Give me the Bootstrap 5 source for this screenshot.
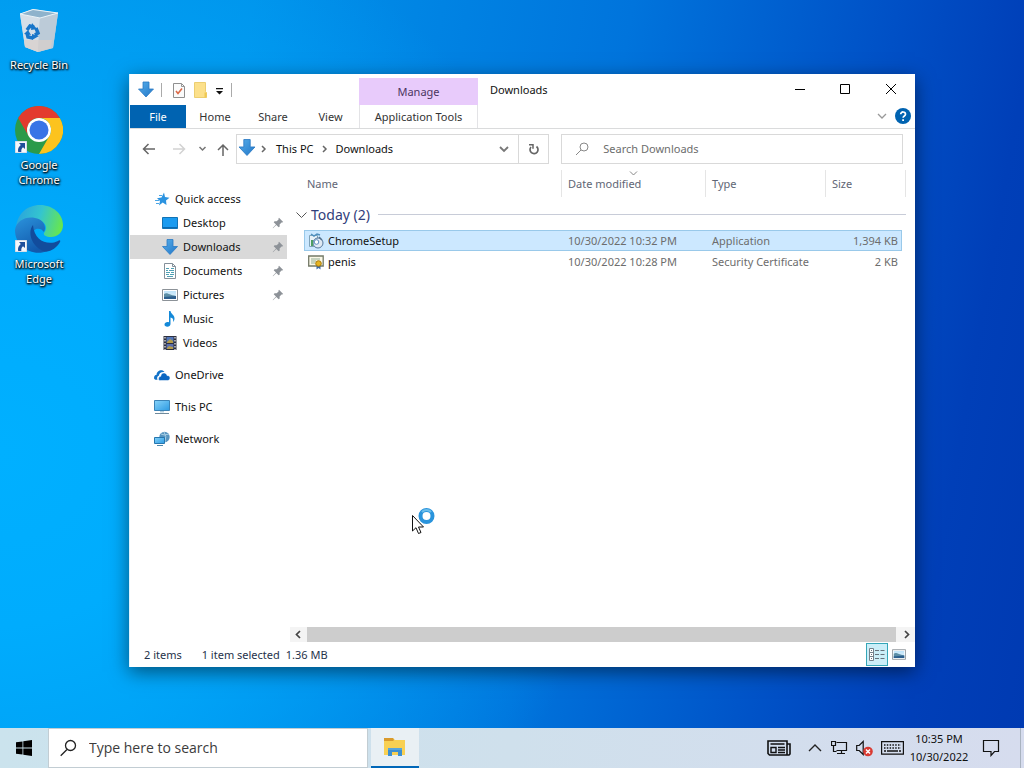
<!DOCTYPE html>
<html lang="en">
<head>
<meta charset="utf-8">
<meta name="viewport" content="width=device-width, initial-scale=1">
<title>Downloads</title>
<link href="https://cdn.jsdelivr.net/npm/bootstrap@5.3.0/dist/css/bootstrap.min.css" rel="stylesheet">
<style>
body{font-family:"Noto Sans","Open Sans",sans-serif;font-size:11px;line-height:16px;color:#111;height:100vh;overflow:hidden;background:#0078d4}
svg{display:block;flex:none}
button{border:0;background:none;padding:0;color:inherit}
.desk{background:radial-gradient(ellipse 60% 80% at 0% 62%,#00b0ff 0%,#00acfd 30%,rgba(0,160,248,0) 100%),linear-gradient(100deg,#0096ea 0%,#0092ea 22%,#0074dc 55%,#0050c6 78%,#003fb8 90%,#003ab2 100%);min-height:0}
.shortcuts{width:78px;padding-top:6px}
.shortcut{height:99px;color:#fff;line-height:15px;text-decoration:none;text-align:center;text-shadow:0 1px 2px #000,1px 1px 2px #000,0 0 3px rgba(0,0,0,.6)}
.shortcut .pic{margin-bottom:3px}
.shortcut:last-child .pic,.shortcut:nth-child(2) .pic{margin-top:1px}
.win{position:absolute;left:129px;right:109px;top:74px;bottom:61px;background:#fff;border-left:1px solid #dff4ff;box-shadow:0 5px 18px rgba(0,0,0,.5)}
.titlebar{height:31px}
.wintitle{font-size:11px}
.quickbar{width:229px;padding-left:8px}
.manage{width:119px;height:27px;background:#e8cbfb;color:#4b3560}
.ctl{width:46px;height:31px}
.tabs{height:24px;border-bottom:1px solid #dadbdc;color:#333}
.tabs button{height:23px;width:58px}
.tabs .filetab{background:#0063b1;color:#fff;width:56px}
.tabs .viewtab{width:57px}
.tabs .apptab{width:119px;border:1px solid #e3e3e6;border-width:0 1px}
.addrow{height:41px;padding:5px 12px 0 10px}
.arrows{width:96px;height:30px}
.box{height:30px;border:1px solid #d9d9d9}
.addr{flex:19 1 0;min-width:0;padding-left:1px}
.find{flex:20 1 0;min-width:0;margin-left:12px;padding-left:13px}
.find input,.tasksearch input{border:0;outline:0;background:none;min-width:0}
.find input::placeholder{color:#6d6d6d;opacity:1}
.refresh{width:30px;height:28px;border-left:1px solid #d9d9d9}
.side{width:157px;padding-top:17px}
.side a{height:24px;color:#111;text-decoration:none;padding-left:24px;gap:5px}
.side a.sub{padding-left:32px;padding-right:3px}
.side a.sel{background:#d9d9d9}
.side a.top{margin-top:8px}
.pane{padding-left:3px}
.files{border-collapse:separate;border-spacing:0;table-layout:fixed;margin:0 9px 0 6px;width:calc(100% - 15px);color:#6d6d6d}
.files th{font-weight:400}
.files thead th{height:27px;padding:0 0 0 6px;border-right:1px solid #e5e5e5;color:#5f6675;position:relative}
.files thead th:first-child{padding-left:11px}
.files .grp{height:33px;color:#31407b;font-size:14px;padding:2px 0 0}
.files .grp hr{margin:0;color:#c8ccd8;opacity:1}
.files td{height:21px;padding:0 0 0 6px;line-height:17px;white-space:nowrap;border:0 solid transparent;border-width:1px 0}
.files .edge{padding:0}
.files .fname{padding-left:3px;border-left-width:1px;color:#111}
.files .fsize{padding:0 3px 0 0;border-right-width:1px;text-align:right}
.files .on td:not(.edge){background:#cce8ff;border-color:#99c9ea}
.files col.gutter{width:8px}
.files col.cdate{width:144px}
.files col.ctype{width:120px}
.files col.csize{width:76px}
.files col.tail{width:4px}
.sortmark{position:absolute;left:67px;top:0}
.scroller{height:15px;background:#f4f4f4}
.scroller button{width:17px}
.scroller .toright{width:19px}
.thumb{background:#cdcdcd}
.status{height:25px;padding:0 5px 0 14px;color:#26324a}
.picked{margin-left:20px}
.total{margin-left:6px}
.viewon{width:22px;height:23px;background:#cbeef8;border:1px solid #35a6b8}
.taskbar{height:40px;background:linear-gradient(90deg,#cbe3ed,#cfe0ec 50%,#d6dcee)}
.start{width:48px}
.tasksearch{width:320px;background:#fff;border:1px solid #c2cdd3;padding-left:11px}
.tasksearch input{font-family:"Open Sans",sans-serif;font-size:14px;color:#333}
.tasksearch input::placeholder{color:#3c3c3c;opacity:1}
.explorer{width:48px;margin-left:3px;background:#e9f0f4;border-bottom:2px solid #0067b8}
.clock{line-height:18px;width:60px;color:#111;margin-left:5px}
.peek{width:4px;border-left:1px solid #a9b3c0}
.pointer{position:absolute;left:410px;top:505px;z-index:5}
</style>
</head>
<body class="d-flex flex-column">
<svg width="0" height="0" class="position-absolute" aria-hidden="true">
<defs>
<linearGradient id="gb" x2="1" y2="1"><stop offset="0" stop-color="#57aeea"/><stop offset="1" stop-color="#2277c8"/></linearGradient>
<linearGradient id="gp" x2="0" y2="1"><stop offset="0" stop-color="#bfe4fa"/><stop offset="1" stop-color="#e3f2fb"/></linearGradient>
<linearGradient id="gm" x2="1" y2="1"><stop offset="0" stop-color="#86d3fa"/><stop offset="1" stop-color="#2d9ae2"/></linearGradient>
</defs>
<symbol id="down" viewBox="0 0 16 16"><path d="M5 .5h6v7h4.500L8 15.500.500 7.500H5z" fill="url(#gb)" stroke="#2a7ac4" stroke-width=".8"/></symbol>
<symbol id="pin" viewBox="0 0 12 12"><path d="M7 .8 11.200 5l-1 .6-.7-.2L7.600 7.400l.1 2-1 .9-2.400-2.400L1 11.200l-.3-.3L4 7.500 1.700 5.200l.9-1 2 .1L6.600 2.400l-.2-.7z" fill="#8d9298"/></symbol>
<symbol id="photo" viewBox="0 0 16 12"><path d="M.5.5h15v11H.5z" fill="#fff" stroke="#8c9298"/><path d="M2 2h12v8H2z" fill="url(#gp)"/><path d="M2 5c3-2 5 1 12 2v3H2z" fill="#5c8ea6"/><path d="M2 8c4 0 7-1 12-1v3H2z" fill="#2c5f8e"/></symbol>
<symbol id="link" viewBox="0 0 12 12"><path d="M0 0h12v12H0z" fill="#f5f7fb" stroke="#b8c6d8"/><path d="M4 2h6v6L8 6.300C6.500 7.500 6.200 8.800 6.300 11H3.200C2.500 8.200 3.600 5.800 5.800 4z" fill="#1f4f9b"/></symbol>
</svg>

<main class="desk position-relative flex-grow-1">
  <nav class="shortcuts d-flex flex-column" aria-label="Desktop">
    <a href="#" class="shortcut d-flex flex-column align-items-center"><svg class="pic" width="48" height="48" viewBox="0 0 48 48"><path d="M5 8 18 3l25 4-5 35-15 4-13-5z" fill="#b9cfdf"/><path d="M5 8 25 12 23 46 10 41z" fill="#d5dfe8"/><path d="M25 12 43 7l-5 35-15 4z" fill="#bccbd8"/><path d="M5 8 18 3.500 43 7 25 12z" fill="#8fb3cc" stroke="#eaf3f8"/><path d="M9 34l28 0-1 8-13 4-13-5z" fill="#d8cfca" opacity=".7"/><g fill="none" stroke="#1976c9" stroke-width="3.500"><path d="M12 24l3-4 4 1M21 22l2 5-3 2M18 32l-5-1-1-4"/></g><g fill="#1976c9"><path d="M17 17l5 6-6 1zM24 30l-7 4 0-6zM9 28l4-4 3 5z"/></g></svg><span>Recycle Bin</span></a>
    <a href="#" class="shortcut d-flex flex-column align-items-center"><svg class="pic" width="48" height="48" viewBox="0 0 48 48"><circle cx="24" cy="24" r="24" fill="#2b9a4a"/><path d="M3.200 12A24 24 0 0 1 44.800 12H24A12 12 0 0 0 13.600 30z" fill="#e33b2e"/><path d="M44.800 12A24 24 0 0 1 24 48L34.400 30A12 12 0 0 0 24 12z" fill="#fcc31e"/><circle cx="24" cy="24" r="12" fill="#fff"/><circle cx="24" cy="24" r="9.500" fill="#3874e6"/><use href="#link" x="0" y="35" width="12" height="12"/></svg><span>Google<br>Chrome</span></a>
    <a href="#" class="shortcut d-flex flex-column align-items-center"><svg class="pic" width="48" height="48" viewBox="0 0 48 48"><defs><linearGradient id="e1" x1="0" x2="1" y1=".3" y2=".5"><stop offset="0" stop-color="#2aa3dd"/><stop offset=".5" stop-color="#34c5cf"/><stop offset="1" stop-color="#67e64f"/></linearGradient><linearGradient id="e2" x2=".5" y2="1"><stop stop-color="#2b93dc"/><stop offset="1" stop-color="#1259ac"/></linearGradient></defs><path d="M1 23C2 9 12 0 25 0c13 0 23 9 23 20 0 8-6 12-12 12-5 0-8-2-7-4 5-6 0-13-8-13C11 15 3 18 1 23z" fill="url(#e1)"/><path d="M0 25c1-9 11-14 20-12 8 1 12 8 9 14-2-3-5-4-8-3-6 3-5 13 2 18 3 3 8 4 10 4C17 52 0 42 0 25z" fill="url(#e2)"/><path d="M18 20c-6 8-1 20 8 25 7 4 15-1 19-8 1-2-1-2-2-1-10 5-24 0-25-16z" fill="#124c9c"/><use href="#link" x="0" y="35" width="12" height="12"/></svg><span>Microsoft<br>Edge</span></a>
  </nav>

  <section class="win d-flex flex-column" aria-label="Downloads window">
    <header class="titlebar d-flex">
      <div class="quickbar d-flex align-items-center">
        <svg width="16" height="17"><use href="#down"/></svg>
        <svg class="ms-1" width="8" height="14"><path d="M3.500 0v14" stroke="#aaa"/></svg>
        <button class="ms-1" aria-label="Properties"><svg width="18" height="18" viewBox="0 0 18 18"><path d="M3.500 2.500h8l3 3v11h-11z" fill="#fbfbfb" stroke="#8f8f8f"/><path d="M11.500 2.500v3h3" fill="none" stroke="#999"/><path d="M6 10l2 2.500 4-5" fill="none" stroke="#dc6a48" stroke-width="1.600"/></svg></button>
        <button class="ms-1" aria-label="New folder"><svg width="18" height="18" viewBox="0 0 18 18"><path d="M2.500 1.500h11v9l1 1v5h-12z" fill="#fce08a" stroke="#ecce70"/><path d="M12.500 11.500h2v5h-2z" fill="#f0c951"/></svg></button>
        <button class="ms-1" aria-label="Customize"><svg width="12" height="14" viewBox="0 0 12 14"><path d="M2 5h7v1.200H2zM2 8h7l-3.500 3.500z" fill="#111"/></svg></button>
        <svg width="8" height="14"><path d="M5.500 0v14" stroke="#aaa"/></svg>
      </div>
      <div class="manage mt-1 d-flex align-items-center justify-content-center">Manage</div>
      <h1 class="wintitle m-0 ms-2 ps-1 d-flex align-items-center flex-grow-1 fw-normal">Downloads</h1>
      <button class="ctl" aria-label="Minimize"><svg width="46" height="31"><path d="M18 15.500h10" stroke="#000"/></svg></button>
      <button class="ctl" aria-label="Maximize"><svg width="46" height="31"><path d="M17.500 10.500h9v9h-9z" fill="none" stroke="#000"/></svg></button>
      <button class="ctl" aria-label="Close"><svg width="46" height="31"><path d="M17 10l10 10M27 10 17 20" stroke="#000"/></svg></button>
    </header>
    <nav class="tabs d-flex align-items-center" aria-label="Ribbon">
      <button class="filetab">File</button><button>Home</button><button>Share</button><button class="viewtab">View</button><button class="apptab">Application Tools</button>
      <button class="ms-auto w-auto me-2" aria-label="Expand ribbon"><svg width="10" height="8"><path d="M1 1l4 4 4-4" fill="none" stroke="#999" stroke-width="1.300"/></svg></button>
      <button class="w-auto me-1" aria-label="Help"><svg width="16" height="18" viewBox="0 0 16 18"><circle cx="8" cy="8" r="8" fill="#0063b1"/><path d="M5.700 6.300c0-3.200 4.800-3 4.800 0C10.500 8 8.100 8 8.100 9.800" fill="none" stroke="#fff" stroke-width="1.700"/><path d="M7.200 11.200H9V13H7.200z" fill="#fff"/></svg></button>
    </nav>
    <div class="addrow d-flex">
      <div class="arrows d-flex align-items-center">
        <button aria-label="Back"><svg width="20" height="16" viewBox="0 0 20 16"><path d="M15 8H4M8.500 3l-5 5 5 5" fill="none" stroke="#666" stroke-width="1.500"/></svg></button>
        <button class="ms-2" aria-label="Forward"><svg width="20" height="16" viewBox="0 0 20 16"><path d="M5 8h11M11.500 3l5 5-5 5" fill="none" stroke="#d2d2d2" stroke-width="1.500"/></svg></button>
        <button class="ms-2" aria-label="Recent"><svg width="12" height="8"><path d="M3.500 2l3 3 3-3" fill="none" stroke="#777" stroke-width="1.500"/></svg></button>
        <button class="ms-2" aria-label="Up"><svg width="16" height="16" viewBox="0 0 16 16"><path d="M7 15V4M2 9l5-5 5 5" fill="none" stroke="#666" stroke-width="1.500"/></svg></button>
      </div>
      <div class="box addr d-flex align-items-center">
        <svg class="mb-1" width="18" height="17" viewBox="0 0 16 16"><use href="#down"/></svg>
        <svg width="20" height="10"><path d="M6 2l3 3-3 3" fill="none" stroke="#666" stroke-width="1.500"/></svg>
        <button>This PC</button>
        <svg class="ms-1" width="18" height="10"><path d="M5 2l3 3-3 3" fill="none" stroke="#666" stroke-width="1.500"/></svg>
        <button>Downloads</button>
        <button class="ms-auto me-2" aria-label="History"><svg width="12" height="10"><path d="M2 3l4 4 4-4" fill="none" stroke="#777" stroke-width="1.800"/></svg></button>
        <button class="refresh d-flex align-items-center justify-content-center" aria-label="Refresh"><svg width="14" height="14" viewBox="0 0 14 14"><path d="M4 5A4 4 0 1 0 9.500 4.500" fill="none" stroke="#666" stroke-width="1.700"/><path d="M2 2.800h4v4" fill="none" stroke="#666" stroke-width="1.500"/></svg></button>
      </div>
      <label class="box find d-flex align-items-center"><svg width="16" height="16" viewBox="0 0 16 16"><circle cx="9" cy="6" r="4" fill="none" stroke="#888"/><path d="M6 9l-5 5" stroke="#888"/></svg><input class="flex-grow-1 ms-2 ps-1" type="search" placeholder="Search Downloads" aria-label="Search Downloads"></label>
    </div>
    <div class="d-flex flex-grow-1">
      <nav class="side flex-shrink-0 d-flex flex-column" aria-label="Folders">
        <a href="#" class="d-flex align-items-center"><svg width="16" height="16" viewBox="0 0 16 16"><path d="M10 1.500l1 4.500 4.500.7-3.500 2.800.5 4.500L8.700 11.500 5 14.500l1-4.500L3 7.200l4.500-.7z" fill="#2b93e0"/><path d="M1 9.500h4M2 12.500h3M5 4.500h3" stroke="#4ba6e6"/></svg>Quick access</a>
        <a href="#" class="sub d-flex align-items-center"><svg width="16" height="14" viewBox="0 0 16 14"><path d="M.5 1.500h15v11H.500z" fill="#1a9bf0" stroke="#1173b5"/><path d="M1 11.500h14" stroke="#0b69b0"/></svg>Desktop<svg class="ms-auto" width="12" height="12"><use href="#pin"/></svg></a>
        <a href="#" class="sub sel d-flex align-items-center"><svg width="16" height="16"><use href="#down"/></svg>Downloads<svg class="ms-auto" width="12" height="12"><use href="#pin"/></svg></a>
        <a href="#" class="sub d-flex align-items-center"><svg width="16" height="16" viewBox="0 0 16 16"><path d="M2.500.5h8l3 3v12h-11z" fill="#fff" stroke="#84909a"/><path d="M10.500.5v3h3" fill="none" stroke="#84909a"/><path d="M4 5.500h3M9 5.500h3M4 7.500h2M7 7.500h5M4 9.500h4M9 9.500h3M4 11.500h3M8 11.500h4M5 13.500h6" stroke="#4fa0b4"/></svg>Documents<svg class="ms-auto" width="12" height="12"><use href="#pin"/></svg></a>
        <a href="#" class="sub d-flex align-items-center"><svg width="16" height="12"><use href="#photo"/></svg>Pictures<svg class="ms-auto" width="12" height="12"><use href="#pin"/></svg></a>
        <a href="#" class="sub d-flex align-items-center"><svg width="16" height="16" viewBox="0 0 16 16"><path d="M7 0h1.500c.3 3 4.500 4 4 8-.2 1.700-1 2.500-1.500 3 .8-3-.6-4-2.500-4.500V13c0 1.500-1.400 2.700-3.200 2.700S2.500 14.800 2.500 13.500 4 11 5.500 11c.6 0 1 .1 1.500.3z" fill="#1489d8"/></svg>Music</a>
        <a href="#" class="sub d-flex align-items-center"><svg width="16" height="16" viewBox="0 0 16 16"><path d="M1.500 1h13v14h-13z" fill="#2d3040"/><path d="M4.500 2h7v6h-7z" fill="#5276b8"/><path d="M4.500 9h7v5h-7z" fill="#5a6eae"/><path d="M5 7l3-3 3 2v2H5zM5 13l2-2 4 1v2H5z" fill="#b39b4b"/><path d="M3 2v13M13 2v13" stroke="#e4e4e4" stroke-width="1.300" stroke-dasharray="1.500 1.500"/></svg>Videos</a>
        <a href="#" class="top d-flex align-items-center"><svg width="16" height="16" viewBox="0 0 16 16"><path d="M0 11C0 8.500 1.500 8 2.500 8 2.500 4 8 1.500 10.500 5 7 4.500 5 6.500 5 8.500c-2 .5-2.200 2.500-1.500 4.200C1.500 13 0 12.500 0 11z" fill="#1272c8"/><path d="M4.500 12c0-2 1.300-2.700 2.300-2.700C7 5 12.500 5 13 8.500c2 0 3 1 3 2.500s-1 2.500-2.500 2.500H6.500c-1.200 0-2-.5-2-1.500z" fill="#0a66c2" stroke="#fff" stroke-width=".5"/></svg>OneDrive</a>
        <a href="#" class="top d-flex align-items-center"><svg width="16" height="16" viewBox="0 0 16 16"><path d="M.5 1.500h15v10H.5z" fill="url(#gm)" stroke="#3b83b6"/><path d="M6 12h4v1.500H6z" fill="#b5d0e0"/><path d="M1 14.500h14" stroke="#6f8a9c"/></svg>This PC</a>
        <a href="#" class="top d-flex align-items-center"><svg width="16" height="16" viewBox="0 0 16 16"><circle cx="10.500" cy="6" r="5.200" fill="#5794bf"/><path d="M7 3q3 2 8 0M10 1q3 4 1 10" fill="none" stroke="#a9cfe5"/><path d="M.5 6.500h10v6H.5z" fill="url(#gm)" stroke="#2576ae"/><path d="M3 14.500h6" stroke="#4d86a9"/></svg>Network</a>
      </nav>
      <div class="pane d-flex flex-column flex-grow-1">
        <div class="flex-grow-1">
        <table class="files">
          <colgroup><col class="gutter"><col><col class="cdate"><col class="ctype"><col class="csize"><col class="tail"></colgroup>
          <thead><tr><th scope="col" colspan="2">Name</th><th scope="col">Date modified<svg class="sortmark" width="9" height="7"><path d="M1 1.500l3.500 3.500L8 1.500" fill="none" stroke="#888"/></svg></th><th scope="col">Type</th><th scope="col" colspan="2">Size</th></tr></thead>
          <tbody>
          <tr><th scope="rowgroup" colspan="6" class="grp"><div class="d-flex align-items-center"><svg width="11" height="8"><path d="M.500 1.500l5 5 5-5" fill="none" stroke="#555"/></svg><span class="ms-1 me-2">Today (2)</span><hr class="flex-grow-1"></div></th></tr>
          <tr class="on"><td class="edge"></td><td class="fname"><div class="d-flex align-items-center gap-1"><svg width="16" height="16" viewBox="0 0 16 16"><path d="M1.500 2.500h8v11h-8z" fill="#e7f0f6" stroke="#7fa2b8"/><path d="M3 1l3 2 3-2 3 1" fill="none" stroke="#4f8fbd" stroke-width="1.500"/><circle cx="10" cy="10" r="5" fill="#dfe9f3" stroke="#55779c"/><circle cx="8.500" cy="9" r="2.300" fill="#fff" stroke="#5c8dc0"/><path d="M4 7v6" stroke="#4d9e61" stroke-width="2"/><path d="M11 4l3 3" stroke="#51708e" stroke-width="1.500"/></svg>ChromeSetup</div></td><td>10/30/2022 10:32 PM</td><td>Application</td><td class="fsize">1,394 KB</td><td class="edge"></td></tr>
          <tr><td class="edge"></td><td class="fname"><div class="d-flex align-items-center gap-1"><svg width="16" height="16" viewBox="0 0 16 16"><path d="M.700 2h14.500v10H.700z" fill="#faf8e7" stroke="#737967" stroke-width="1.300"/><path d="M3 5h9M3 7h5M3 9h4" stroke="#93ad94"/><path d="M8.500 10.500v5l2-1.500 2 1.500v-5z" fill="#3d6aa5"/><circle cx="10.500" cy="9.500" r="2.800" fill="#e6b422" stroke="#a6790c"/></svg>penis</div></td><td>10/30/2022 10:28 PM</td><td>Security Certificate</td><td class="fsize">2 KB</td><td class="edge"></td></tr>
          </tbody>
        </table>
        </div>
        <div class="scroller d-flex">
          <button aria-label="Scroll left"><svg width="17" height="15"><path d="M10 4L6.500 7.500 10 11" fill="none" stroke="#444" stroke-width="1.700"/></svg></button>
          <div class="thumb flex-grow-1"></div>
          <button class="toright ps-1" aria-label="Scroll right"><svg width="15" height="15"><path d="M5 4l3.500 3.500L5 11" fill="none" stroke="#444" stroke-width="1.700"/></svg></button>
        </div>
      </div>
    </div>
    <footer class="status d-flex align-items-center">
      <span>2 items</span><span class="picked">1 item selected</span><span class="total">1.36 MB</span>
      <button class="viewon ms-auto d-flex align-items-center justify-content-center" aria-label="Details view"><svg width="18" height="15" viewBox="0 0 18 15"><path d="M1.500 1.500h4v12h-4zM1.500 5.500h4M1.500 9.500h4" fill="#fff" stroke="#74808a"/><path d="M3 3.500h1M3 7.500h1M3 11.500h1M7 3.500h4M12.500 3.500h4M7 7.500h4M12.500 7.500h4M7 11.500h4M12.500 11.500h4" stroke="#66727c"/></svg></button>
      <button class="ms-1 me-1" aria-label="Thumbnails view"><svg width="14" height="11"><use href="#photo"/></svg></button>
    </footer>
  </section>

  <svg class="pointer" width="26" height="30" viewBox="0 0 26 30"><circle cx="16.500" cy="11" r="6" fill="none" stroke="#2a94dc" stroke-width="4"/><path d="M12 7a6 6 0 0 1 9 0" fill="none" stroke="#6bbdeb" stroke-width="2"/><path d="M2.500 10.500v15.500l3.500-3.300 2.500 5.800 2.500-1-2.500-5.500h5z" fill="#fff" stroke="#111"/></svg>
</main>

<footer class="taskbar d-flex flex-shrink-0">
  <button class="start d-flex align-items-center justify-content-center" aria-label="Start"><svg width="16" height="16" viewBox="0 0 16 16"><path d="M0 2.300 6.500 1.400v6.200H0zM7.300 1.300 16 0v7.600H7.300zM0 8.400h6.500v6.200L0 13.700zM7.300 8.400H16V16l-8.700-1.300z" fill="#000"/></svg></button>
  <label class="tasksearch d-flex align-items-center"><svg width="17" height="18" viewBox="0 0 17 18"><circle cx="10.500" cy="6.500" r="5" fill="none" stroke="#222" stroke-width="1.300"/><path d="M7 10.500.700 16.800" stroke="#222" stroke-width="1.300"/></svg><input class="flex-grow-1 ms-2 ps-1" type="search" placeholder="Type here to search" aria-label="Type here to search"></label>
  <button class="explorer d-flex align-items-center justify-content-center" aria-label="File Explorer"><svg width="22" height="20" viewBox="0 0 22 20"><path d="M0 1h9l2 2h10v15H0z" fill="#f8d053"/><path d="M0 1h9l1 2-1 1H0z" fill="#d99a2c"/><path d="M4 11h14v8h-4v-4H8v4H4z" fill="#3c8fd0"/><path d="M4 11h14v2H4z" fill="#59a5da"/></svg></button>
  <div class="ms-auto d-flex align-items-center">
    <button aria-label="News"><svg width="24" height="18" viewBox="0 0 24 18"><path d="M1 2h19v14H2.500L1 14.500zM20 5h3v10l-1 1h-3" fill="none" stroke="#111" stroke-width="1.600"/><path d="M3.500 5h14M11 8.500h7M11 11h7M11 13.500h7" stroke="#111" stroke-width="1.300"/><path d="M4 8.500h5v5H4z" fill="none" stroke="#111" stroke-width="1.400"/></svg></button>
    <button class="ms-3" aria-label="Hidden icons"><svg width="16" height="16"><path d="M2 11l6-6 6 6" fill="none" stroke="#222" stroke-width="1.400"/></svg></button>
    <button class="ms-2" aria-label="Network"><svg width="17" height="16" viewBox="0 0 17 16"><path d="M5.500 2.500h10v8h-10M10.500 10.500v3M6 13.500h8M.5 1.500h4v4h-4zM2.500 5.500v6h3" fill="none" stroke="#111" stroke-width="1.200"/></svg></button>
    <button class="ms-2" aria-label="Volume"><svg width="17" height="17" viewBox="0 0 17 17"><path d="M.7 5.500h2.500l4-4v13l-4-4H.7z" fill="none" stroke="#111" stroke-width="1.200"/><circle cx="12" cy="11.500" r="4.800" fill="#d93a32"/><path d="M10 9.500l4 4M14 9.500l-4 4" stroke="#fff" stroke-width="1.500"/></svg></button>
    <button class="ms-2" aria-label="Keyboard"><svg width="23" height="14" viewBox="0 0 23 14"><path d="M.6.600h21.800v12.600H.6z" fill="none" stroke="#111" stroke-width="1.200"/><path d="M3 4h17M3 7h17" stroke="#111" stroke-width="1.300" stroke-dasharray="1.500 1.300"/><path d="M3 10h2M6 10h11M18 10h2" stroke="#111" stroke-width="1.300"/></svg></button>
    <div class="clock text-center">10:35 PM<br>10/30/2022</div>
    <button class="mx-2 px-1" aria-label="Notifications"><svg width="19" height="18" viewBox="0 0 19 18"><path d="M2.500 1.500h15v11h-4l-3.500 4v-4H2.500z" fill="none" stroke="#111" stroke-width="1.200"/></svg></button>
    <span class="px-1"></span>
  </div>
  <span class="peek"></span>
</footer>
<script src="https://cdn.jsdelivr.net/npm/bootstrap@5.3.0/dist/js/bootstrap.bundle.min.js"></script>
</body>
</html>
